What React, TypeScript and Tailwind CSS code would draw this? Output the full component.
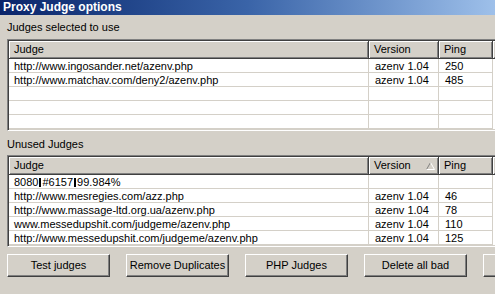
import React from 'react'

type Row = { judge: React.ReactNode; version: string; ping: string }

const selected: Row[] = [
  { judge: 'http://www.ingosander.net/azenv.php', version: 'azenv 1.04', ping: '250' },
  { judge: 'http://www.matchav.com/deny2/azenv.php', version: 'azenv 1.04', ping: '485' },
  { judge: '', version: '', ping: '' },
  { judge: '', version: '', ping: '' },
  { judge: '', version: '', ping: '' },
]

// the odd row has control chars that render as solid bars
const Bar = () => <span className="inline-block w-[2px] h-[9px] bg-black mx-[1px] align-[-1px]" />

const unused: Row[] = [
  { judge: <>8080<Bar />#6157<Bar />99.984%</>, version: '', ping: '' },
  { judge: 'http://www.mesregies.com/azz.php', version: 'azenv 1.04', ping: '46' },
  { judge: 'http://www.massage-ltd.org.ua/azenv.php', version: 'azenv 1.04', ping: '78' },
  { judge: 'www.messedupshit.com/judgeme/azenv.php', version: 'azenv 1.04', ping: '110' },
  { judge: 'http://www.messedupshit.com/judgeme/azenv.php', version: 'azenv 1.04', ping: '125' },
]

const headerCell =
  'h-[18px] flex items-center pl-[5px] bg-[#d4d0c8] border-r border-b border-[#404040] shadow-[inset_1px_1px_0_#ffffff,inset_-1px_-1px_0_#808080] whitespace-nowrap overflow-hidden'

function SortArrow() {
  return (
    <svg width="9" height="8" viewBox="0 0 9 8" className="mr-[3px]">
      <path d="M0.5 7.5 L4.5 0.5" stroke="#808080" strokeWidth="1" fill="none" />
      <path d="M4.5 0.5 L8.5 7.5 L0.5 7.5" stroke="#ffffff" strokeWidth="1" fill="none" />
    </svg>
  )
}

function JudgeList({ rows, sorted }: { rows: Row[]; sorted?: boolean }) {
  return (
    <div className="w-[520px] bg-white border border-t-[#808080] border-l-[#808080] border-b-white border-r-white shadow-[inset_1px_1px_0_#404040,inset_-1px_-1px_0_#d4d0c8] p-[1px]">
      <div className="grid grid-cols-[360px_70px_54px_1fr]">
        <div className={headerCell}>Judge</div>
        <div className={`${headerCell} justify-between`}>
          <span>Version</span>
          {sorted && <SortArrow />}
        </div>
        <div className={headerCell}>Ping</div>
        <div className={headerCell}></div>
        {rows.map((r, i) => (
          <React.Fragment key={i}>
            <div className="h-[14px] leading-[14px] pl-[5px] border-r border-b border-[#d4d0c8] whitespace-nowrap overflow-hidden">
              {r.judge}
            </div>
            <div className="h-[14px] leading-[14px] pl-[6px] border-r border-b border-[#d4d0c8] whitespace-nowrap">
              {r.version}
            </div>
            <div className="h-[14px] leading-[14px] pl-[6px] border-r border-b border-[#d4d0c8]">{r.ping}</div>
            <div className="h-[14px]"></div>
          </React.Fragment>
        ))}
      </div>
    </div>
  )
}

function Button({ label }: { label: string }) {
  return (
    <button className="w-[103px] h-[23px] shrink-0 bg-[#d4d0c8] border border-t-white border-l-white border-b-[#404040] border-r-[#404040] shadow-[inset_-1px_-1px_0_#808080] text-black text-[11px] leading-none">
      {label}
    </button>
  )
}

export default function App() {
  return (
    <div className="w-[495px] h-[294px] overflow-hidden bg-[#d4d0c8] text-black text-[11px] font-['Liberation_Sans',Arial,sans-serif]">
      {/* title bar */}
      <div className="h-[15px] bg-gradient-to-r from-[#0a246a] via-[#3a64a8] to-[#9ec0ea] text-white font-bold text-[12px] leading-[14px] pl-[3px] whitespace-nowrap">
        Proxy Judge options
      </div>

      <div className="pl-[7px]">
        <div className="h-[24px] pt-[6px] leading-[13px]">Judges selected to use</div>
        <JudgeList rows={selected} />
        <div className="h-[24px] pt-[7px] leading-[13px]">Unused Judges</div>
        <JudgeList rows={unused} sorted />
        <div className="flex gap-[16px] mt-[7px]">
          <Button label="Test judges" />
          <Button label="Remove Duplicates" />
          <Button label="PHP Judges" />
          <Button label="Delete all bad" />
          <Button label="" />
        </div>
      </div>
    </div>
  )
}
